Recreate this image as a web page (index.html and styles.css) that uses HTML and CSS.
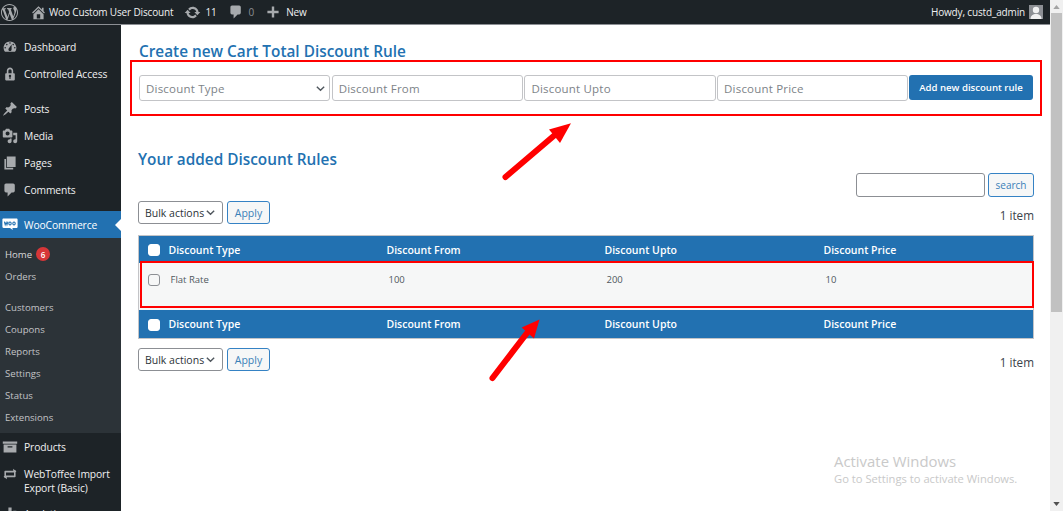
FILE: index.html
```html
<!DOCTYPE html>
<html lang="en">
<head>
<meta charset="utf-8">
<title>Discount Rules</title>
<link rel="stylesheet" href="styles.css">
</head>
<body>
<header class="adminbar">
  <svg class="bar-logo" viewBox="0 0 20 20"><path d="M20 10c0-5.51-4.49-10-10-10C4.48 0 0 4.49 0 10c0 5.52 4.48 10 10 10 5.51 0 10-4.48 10-10zM7.78 15.37L4.37 6.22c.55-.02 1.17-.08 1.17-.08.5-.06.44-1.13-.06-1.11 0 0-1.45.11-2.37.11-.18 0-.37 0-.58-.01C4.12 2.69 6.87 1.11 10 1.11c2.33 0 4.45.87 6.05 2.34-.68-.11-1.65.39-1.65 1.58 0 .74.45 1.36.9 2.1.35.61.55 1.36.55 2.46 0 1.49-1.4 5-1.4 5l-3.03-8.37c.54-.02.82-.17.82-.17.5-.05.44-1.25-.06-1.22 0 0-1.44.12-2.38.12-.87 0-2.33-.12-2.33-.12-.5-.03-.56 1.2-.06 1.22l.92.08 1.26 3.41zM17.41 10c.24-.64.74-1.87.43-4.25.7 1.29 1.05 2.71 1.05 4.25 0 3.29-1.73 6.24-4.4 7.78.97-2.59 1.94-5.2 2.92-7.78zM6.1 18.09C3.12 16.65 1.11 13.53 1.11 10c0-1.3.23-2.48.72-3.59C3.25 10.3 4.67 14.2 6.1 18.09zm4.03-6.63l2.58 6.98c-.86.29-1.76.45-2.71.45-.79 0-1.57-.11-2.29-.33.81-2.38 1.62-4.74 2.42-7.1z"/></svg>
  <svg class="bar-icon home" viewBox="0 0 20 20"><path d="M16 8.5l1.53 1.53-1.06 1.06L10 4.62l-6.47 6.47-1.06-1.06L10 2.5l4 4v-2h2v4zm-6-2.46l6 5.99V18H4v-5.97zM12 17v-5H8v5h4z"/></svg>
  <span class="bar-text site">Woo Custom User Discount</span>
  <svg class="bar-icon update" viewBox="0 0 20 20"><path d="M10.2 3.28c3.53 0 6.43 2.61 6.92 6h2.08l-3.5 4-3.5-4h2.32c-.45-1.97-2.21-3.45-4.32-3.45-1.45 0-2.73.71-3.54 1.78L4.95 5.66C6.23 4.2 8.11 3.28 10.2 3.28zm-.4 13.44c-3.52 0-6.43-2.61-6.92-6H.8l3.5-4c1.17 1.33 2.33 2.67 3.5 4H5.48c.45 1.97 2.21 3.45 4.32 3.45 1.45 0 2.73-.71 3.54-1.78l1.71 1.95c-1.28 1.46-3.15 2.38-5.25 2.38z"/></svg>
  <span class="bar-text count">11</span>
  <svg class="bar-icon comment" viewBox="0 0 20 20"><path d="M5 2h9c1.1 0 2 .9 2 2v7c0 1.1-.9 2-2 2h-2l-5 5v-5H5c-1.1 0-2-.9-2-2V4c0-1.1.9-2 2-2z"/></svg>
  <span class="bar-text zero">0</span>
  <svg class="bar-icon plus" viewBox="0 0 20 20"><path d="M17 8.5v3h-5.5V17h-3v-5.500H3v-3h5.500V3h3v5.500H17z"/></svg>
  <span class="bar-text">New</span>
  <span class="bar-text howdy">Howdy, custd_admin</span>
  <span class="avatar"><svg viewBox="0 0 14 14"><circle cx="7" cy="5" r="3.2"/><path d="M1.5 14c0-3.5 2.500-5 5.500-5s5.500 1.500 5.500 5z"/></svg></span>
</header>

<div class="shell">
  <nav class="sidebar">
    <a class="item first"><svg viewBox="0 0 20 20"><path d="M3.76 16h12.48c1.100-1.370 1.760-3.110 1.760-5 0-4.420-3.580-8-8-8s-8 3.580-8 8c0 1.890.66 3.630 1.760 5zM10 4c.55 0 1 .45 1 1s-.45 1-1 1-1-.45-1-1 .45-1 1-1zM6 6c.55 0 1 .45 1 1s-.45 1-1 1-1-.45-1-1 .45-1 1-1zm8 0c.55 0 1 .45 1 1s-.45 1-1 1-1-.45-1-1 .45-1 1-1zm-5.370 5.550L12 7v6c0 1.100-.9 2-2 2s-2-.9-2-2c0-.57.24-1.080.63-1.450zM4 10c.55 0 1 .45 1 1s-.45 1-1 1-1-.45-1-1 .45-1 1-1zm12 0c.55 0 1 .45 1 1s-.45 1-1 1-1-.45-1-1 .45-1 1-1z"/></svg>Dashboard</a>
    <a class="item"><svg viewBox="0 0 20 20"><path d="M14 9h1c.55 0 1 .45 1 1v7c0 .55-.45 1-1 1H5c-.55 0-1-.45-1-1v-7c0-.55.45-1 1-1h1V6c0-2.210 1.790-4 4-4s4 1.790 4 4v3zm-2 0V6c0-1.100-.9-2-2-2s-2 .9-2 2v3h4zm-1 7l-.36-2.150c.51-.24.86-.75.86-1.350 0-.83-.67-1.500-1.500-1.500s-1.500.67-1.500 1.500c0 .6.35 1.110.86 1.350L9 16h2z"/></svg>Controlled Access</a>
    <a class="item group"><svg viewBox="0 0 20 20"><path d="M10.440 3.020l1.820-1.820 6.360 6.350-1.830 1.820c-1.050-.68-2.480-.57-3.410.36l-.75.75c-.92.93-1.040 2.350-.35 3.410l-1.830 1.820-2.410-2.410-2.800 2.790c-.42.42-3.380 2.710-3.800 2.290s1.860-3.390 2.280-3.810l2.790-2.790L4.100 9.360l1.830-1.820c1.050.69 2.480.57 3.400-.36l.75-.75c.93-.92 1.050-2.350.36-3.410z"/></svg>Posts</a>
    <a class="item"><svg viewBox="0 0 20 20"><path d="M13 11V4c0-.55-.45-1-1-1h-1.670L9 1H5L3.670 3H2c-.55 0-1 .45-1 1v7c0 .55.45 1 1 1h10c.55 0 1-.45 1-1zM7 4.500c1.380 0 2.500 1.120 2.500 2.500S8.380 9.500 7 9.500 4.500 8.380 4.500 7 5.620 4.500 7 4.500zM14 6h5v10.500c0 1.380-1.120 2.500-2.500 2.500S14 17.880 14 16.500s1.120-2.500 2.500-2.500c.17 0 .34.02.5.05V9h-3V6zm-4 8.050V13h2v3.500c0 1.380-1.120 2.500-2.500 2.500S7 17.880 7 16.500 8.120 14 9.500 14c.17 0 .34.02.5.05z"/></svg>Media</a>
    <a class="item"><svg viewBox="0 0 20 20"><path d="M6 15V2h11v13H6zm-1 1h9v2H3V5h2v11z"/></svg>Pages</a>
    <a class="item"><svg viewBox="0 0 20 20"><path d="M5 2h9c1.100 0 2 .9 2 2v7c0 1.100-.9 2-2 2h-2l-5 5v-5H5c-1.100 0-2-.9-2-2V4c0-1.100.9-2 2-2z"/></svg>Comments</a>
    <a class="item current"><svg class="woo" viewBox="0 0 20 16"><path class="woo-bg" d="M2 1h16c1 0 1.500.6 1.500 1.500v9c0 1-.6 1.500-1.500 1.500h-5l.5 2.500-3.500-2.500H2c-1 0-1.500-.6-1.500-1.500v-9C.5 1.600 1 1 2 1z"/><path class="woo-fg" d="M3 5l1 4 1.200-3 1 3 1.200-4M10 5.500a1.500 1.800 0 1 0 .01 0M15 5.500a1.500 1.800 0 1 0 .01 0"/></svg>WooCommerce</a>
    <div class="submenu">
      <a class="sub strong">Home <span class="badge">6</span></a>
      <a class="sub orders">Orders</a>
      <a class="sub gap">Customers</a>
      <a class="sub">Coupons</a>
      <a class="sub">Reports</a>
      <a class="sub">Settings</a>
      <a class="sub">Status</a>
      <a class="sub">Extensions</a>
    </div>
    <a class="item"><svg viewBox="0 0 20 20"><path d="M1 3h18v3H1zM2 7h16v10H2zm5 2v1.500h6V9z" fill-rule="evenodd"/></svg>Products</a>
    <a class="item two"><svg viewBox="0 0 20 20"><path d="M4 6h10V3.500L18 7l-2.500 2.500V8H5v5h1v2H3V7c0-.6.4-1 1-1zm12 8H6v2.500L2 13l2.500-2.500V12H15V7h-1V5h3v8c0 .6-.4 1-1 1z"/></svg><span>WebToffee Import<br>Export (Basic)</span></a>
    <a class="item last"><svg viewBox="0 0 20 20"><path d="M8 2h4v16H8zM2 9h4v9H2zm12-3h4v12h-4z"/></svg>Analytics</a>
  </nav>

  <main class="content">
    <h2 class="title create">Create new Cart Total Discount Rule</h2>
    <form class="rule-form">
      <div class="field select-field"><span>Discount Type</span><svg viewBox="0 0 12 12"><path d="M2 4l4 4 4-4"/></svg></div>
      <div class="field"><span>Discount From</span></div>
      <div class="field"><span>Discount Upto</span></div>
      <div class="field"><span>Discount Price</span></div>
      <button class="primary" type="button">Add new discount rule</button>
    </form>

    <h2 class="title added">Your added Discount Rules</h2>
    <div class="search-row">
      <div class="search-box"></div>
      <button class="ghost search-btn" type="button">search</button>
    </div>
    <div class="tablenav top">
      <div class="bulk"><span>Bulk actions</span><svg viewBox="0 0 12 12"><path d="M2 4l4 4 4-4"/></svg></div>
      <button class="ghost apply" type="button">Apply</button>
      <span class="items">1 item</span>
    </div>

    <table class="rules">
      <thead>
        <tr><th class="c0"><span class="box on"></span></th><th class="c1">Discount Type</th><th class="c2">Discount From</th><th class="c3">Discount Upto</th><th>Discount Price</th></tr>
      </thead>
      <tbody>
        <tr><td class="c0"><span class="box"></span></td><td>Flat Rate</td><td>100</td><td>200</td><td>10</td></tr>
      </tbody>
      <tfoot>
        <tr><th class="c0"><span class="box on"></span></th><th>Discount Type</th><th>Discount From</th><th>Discount Upto</th><th>Discount Price</th></tr>
      </tfoot>
    </table>

    <div class="tablenav bottom">
      <div class="bulk"><span>Bulk actions</span><svg viewBox="0 0 12 12"><path d="M2 4l4 4 4-4"/></svg></div>
      <button class="ghost apply" type="button">Apply</button>
      <span class="items">1 item</span>
    </div>
  </main>

  <div class="scrollbar">
    <svg class="sb-up" viewBox="0 0 8 5"><path d="M4 0l4 5H0z"/></svg>
    <div class="sb-thumb"></div>
    <svg class="sb-down" viewBox="0 0 8 5"><path d="M0 0h8L4 5z"/></svg>
  </div>
</div>

<div class="mark box-one"></div>
<div class="mark box-two"></div>
<svg class="arrows" viewBox="0 0 1063 511">
  <path class="shaft" d="M505.500 177L556 134"/>
  <path class="head" d="M571 123.300L549 129.500L560 143z"/>
  <path class="shaft" d="M492.500 378L527 333"/>
  <path class="head" d="M539.500 319.500L521.700 327.500L534 338.500z"/>
</svg>
<div class="activate">
  <div class="act-title">Activate Windows</div>
  <div class="act-sub">Go to Settings to activate Windows.</div>
</div>
</body>
</html>
```

FILE: styles.css
```css
* { box-sizing: border-box; }
html, body { margin: 0; height: 511px; overflow: hidden; }
body { font-family: "Open Sans", "Noto Sans", sans-serif; background: #fff; color: #3c434a; position: relative; }

.adminbar { height: 25px; width: 1050px; background: #1d2327; border-bottom: 1px solid #8c8f94; display: flex; align-items: center; color: #f0f0f1; padding-left: 1px; }
.adminbar svg { fill: #a7aaad; flex: none; }
.bar-logo { width: 17px; height: 17px; margin-right: 12px; }
.bar-icon { width: 16px; height: 16px; }
.home { margin-right: 2px; width: 17px; height: 17px; }
.update { margin-left: 11px; margin-right: 4px; width: 17px; height: 17px; }
.comment { margin-left: 11px; margin-right: 5px; }
.plus { margin-left: 11px; margin-right: 5px; }
.bar-text { font-size: 10px; letter-spacing: -.15px; line-height: 24px; white-space: nowrap; }
.zero { color: #8c8f94; }
.howdy { margin-left: auto; margin-right: 4px; }
.avatar { width: 14px; height: 14px; background: #8c8f94; margin-right: 7px; display: block; }
.avatar svg { display: block; width: 14px; height: 14px; fill: #f0f0f1 !important; }

.shell { display: flex; height: 486px; }
.sidebar { width: 121px; flex: none; background: #1d2327; overflow: hidden; padding-top: 8px; }
.item { display: flex; align-items: center; min-height: 27px; color: #f0f0f1; font-size: 10.300px; letter-spacing: -.1px; padding-left: 24px; position: relative; line-height: 14px; }
.item svg { position: absolute; left: 2px; top: 6px; width: 16px; height: 16px; fill: #a7aaad; }
.group { margin-top: 8px; }
.current { background: #2271b1; color: #fff; margin-top: 8px; }
.current::after { content: ""; position: absolute; right: 0; top: 8px; border: 6px solid transparent; border-right-color: #fff; border-left: 0; }
.current svg.woo { left: 2px; top: 6px; width: 16px; height: 14px; }
.woo-bg { fill: #fff; }
.woo-fg { fill: none; stroke: #2271b1; stroke-width: 1.300; }
.submenu { background: #2c3338; padding: 5px 0 5px; }
.sub { display: flex; align-items: center; height: 22px; font-size: 9.600px; color: #c3c4c7; padding-left: 5px; gap: 4px; }
.strong { color: #d8d9da; }
.orders { margin-bottom: 8px; height: 23px; }
.badge { width: 14px; height: 14px; border-radius: 50%; background: #d63638; color: #fff; font-size: 8px; font-weight: 600; display: flex; align-items: center; justify-content: center; }
.two { padding-top: 6px; padding-bottom: 6px; min-height: 42px; }
.item.two span { display: block; }
.last { margin-top: -2px; }

.content { width: 929px; flex: none; padding: 0 16px 0 17px; }
.title { margin: 0; color: #2271b1; font-size: 15.350px; font-weight: 600; line-height: 20px; }
.create { padding: 16px 0 0 1px; }
.added { margin-top: 48px; }
.rule-form { display: flex; margin: 14px 0 0 1px; gap: 1.500px; align-items: flex-start; }
.field { width: 191.200px; height: 26px; border: 1px solid #c3c4c7; border-radius: 3px; background: #fff; font-size: 11.500px; letter-spacing: .2px; color: #7d8388; padding-left: 6px; display: flex; align-items: center; justify-content: space-between; }
.select-field svg, .bulk svg { width: 11px; height: 11px; fill: none; stroke: #50575e; stroke-width: 1.500; }
.select-field svg { margin-right: 3px; }
.primary { width: 124.500px; height: 25px; margin-left: -1px; background: #2271b1; border: 0; border-radius: 3px; color: #fff; font: 600 9.600px "Open Sans", sans-serif; padding: 0; }
.search-row { display: flex; justify-content: flex-end; gap: 3px; margin-top: 4px; }
.search-box { width: 129px; height: 24px; border: 1px solid #8c8f94; border-radius: 3px; }
.ghost { border: 1px solid #3582c4; border-radius: 3px; background: #f6f7f7; color: #3a80b8; font: 10.500px "Open Sans", sans-serif; padding: 0; }
.search-btn { width: 46px; height: 24px; font-size: 10px; }
.tablenav { display: flex; align-items: center; height: 23px; }
.top { margin-top: 4px; }
.bottom { margin-top: 9px; }
.bulk { width: 85px; height: 23px; border: 1px solid #8c8f94; border-radius: 3px; font-size: 10.500px; display: flex; align-items: center; justify-content: space-between; padding: 0 6px; color: #2c3338; }
.apply { width: 43px; height: 23px; margin-left: 4px; }
.items { margin-left: auto; font-size: 11.700px; color: #3c434a; padding-top: 4px; }

.rules { width: 896px; margin-top: 11px; border-collapse: collapse; table-layout: fixed; border: 1px solid #c3c4c7; font-size: 10.500px; }
.rules th { background: #2271b1; color: #fff; font-weight: 600; text-align: left; padding: 1px 0 0 0; }
.rules tfoot th { padding: 0; }
.rules thead tr { height: 27px; }
.rules tfoot tr { height: 29px; }
.rules tbody tr { height: 47px; background: #f6f7f7; }
.rules td { vertical-align: top; padding: 10px 0 0 2px; color: #50575e; font-size: 9.500px; }
.c0 { width: 30px; }
.c1 { width: 218px; }
.c2 { width: 218px; }
.c3 { width: 219px; }
.rules .c0 { padding: 2px 0 0 9px; vertical-align: middle; }
.rules td.c0 { vertical-align: top; padding-top: 11px; }
.box { display: block; width: 12px; height: 12px; border-radius: 3px; border: 1px solid #8c8f94; background: #f6f7f7; }
.box.on { background: #fff; border-color: #fff; }

.scrollbar { flex: 1; background: #f0f0f0; position: relative; margin-top: -25px; height: 511px; }
.sb-thumb { position: absolute; left: 1px; right: 1px; top: 13px; height: 299px; background: #c1c1c1; }
.sb-up, .sb-down { position: absolute; left: 3px; width: 7px; height: 4px; fill: #505050; }
.sb-up { top: 5px; fill: #a3a3a3; }
.sb-down { bottom: 5px; }

.mark { position: absolute; border: 2px solid #f00; }
.box-one { left: 130px; top: 60px; width: 912px; height: 56px; }
.box-two { left: 140px; top: 261px; width: 894px; height: 47px; }
.arrows { position: absolute; left: 0; top: 0; width: 1063px; height: 511px; pointer-events: none; }
.shaft { stroke: #f00; stroke-width: 6; stroke-linecap: round; fill: none; }
.head { fill: #f00; }
.activate { position: absolute; left: 834px; top: 452px; color: #c9c9c9; }
.act-title { font-size: 14.900px; line-height: 19px; }
.act-sub { font-size: 11.200px; line-height: 16px; }
```
